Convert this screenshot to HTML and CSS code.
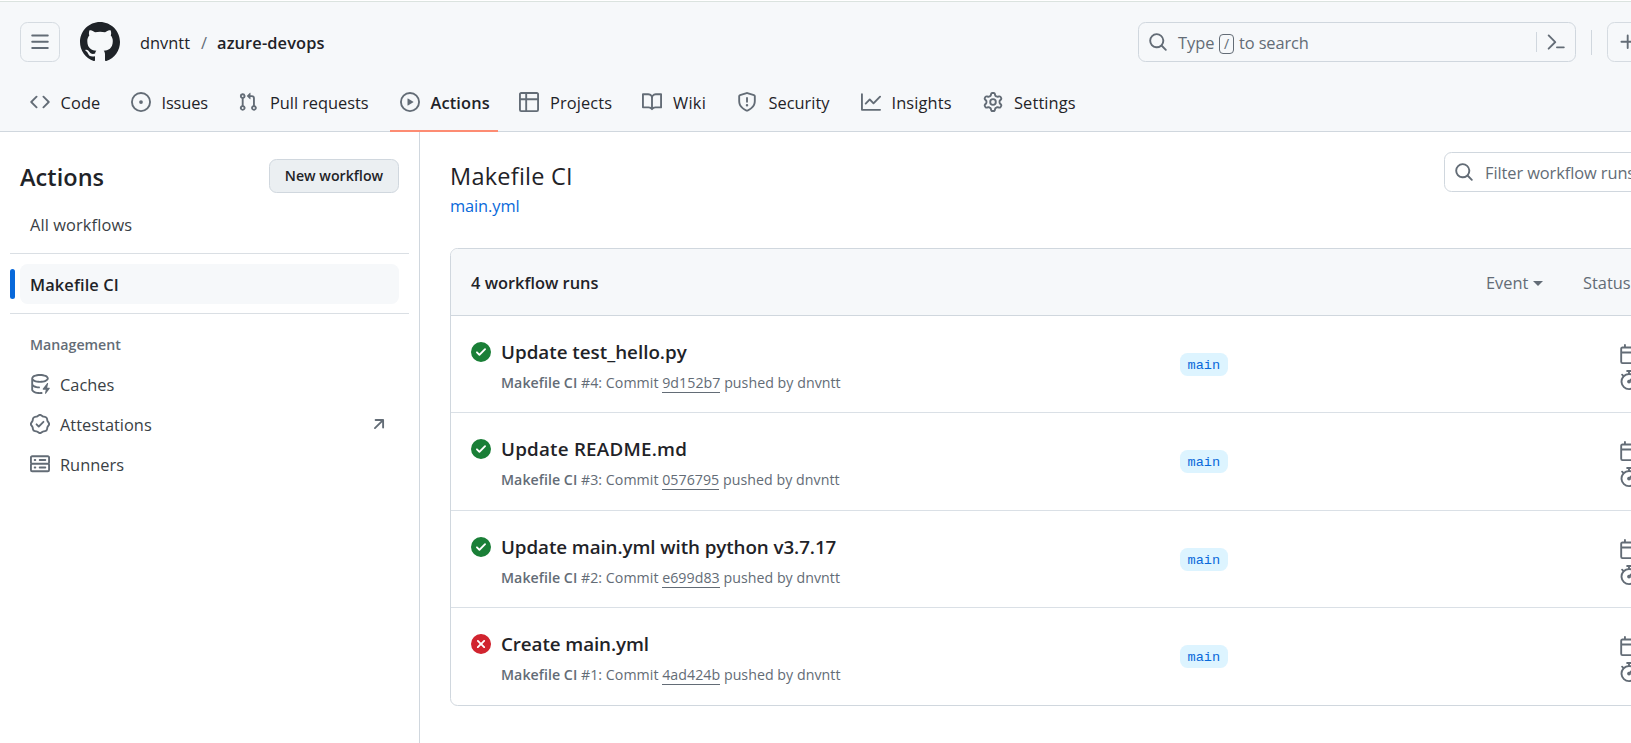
FILE: index.html
```html
<!DOCTYPE html>
<html lang="en">
<head>
<meta charset="utf-8">
<title>Workflow runs · dnvntt/azure-devops</title>
<link rel="stylesheet" href="styles.css">
</head>
<body>
<svg class="sprite" aria-hidden="true">
  <symbol id="bars" viewBox="0 0 16 16"><path d="M1 2.75A.75.75 0 0 1 1.75 2h12.5a.75.75 0 0 1 0 1.5H1.75A.75.75 0 0 1 1 2.75Zm0 5A.75.75 0 0 1 1.75 7h12.5a.75.75 0 0 1 0 1.5H1.75A.75.75 0 0 1 1 7.75ZM1.75 12h12.5a.75.75 0 0 1 0 1.5H1.75a.75.75 0 0 1 0-1.5Z"/></symbol>
  <symbol id="github" viewBox="0 0 16 16"><path d="M8 0c4.42 0 8 3.58 8 8a8.013 8.013 0 0 1-5.45 7.59c-.4.08-.55-.17-.55-.38 0-.27.01-1.13.01-2.2 0-.75-.25-1.23-.54-1.48 1.78-.2 3.65-.88 3.65-3.95 0-.88-.31-1.59-.82-2.15.08-.2.36-1.02-.08-2.12 0 0-.67-.22-2.2.82-.64-.18-1.32-.27-2-.27-.68 0-1.36.09-2 .27-1.53-1.03-2.2-.82-2.2-.82-.44 1.1-.16 1.92-.08 2.12-.51.56-.82 1.28-.82 2.15 0 3.06 1.86 3.75 3.64 3.95-.23.2-.44.55-.51 1.07-.46.21-1.61.55-2.33-.66-.15-.24-.6-.83-1.23-.82-.67.01-.27.38.01.53.34.19.73.9.82 1.13.16.45.68 1.31 2.69.94 0 .67.01 1.3.01 1.49 0 .21-.15.45-.55.38A7.995 7.995 0 0 1 0 8c0-4.42 3.58-8 8-8Z"/></symbol>
  <symbol id="code" viewBox="0 0 16 16"><path d="m11.28 3.22 4.25 4.25a.75.75 0 0 1 0 1.06l-4.25 4.25a.749.749 0 0 1-1.275-.326.749.749 0 0 1 .215-.734L13.94 8l-3.72-3.72a.749.749 0 0 1 .326-1.275.749.749 0 0 1 .734.215Zm-6.56 0a.751.751 0 0 1 1.042.018.751.751 0 0 1 .018 1.042L2.06 8l3.72 3.72a.749.749 0 0 1-.326 1.275.749.749 0 0 1-.734-.215L.47 8.53a.75.75 0 0 1 0-1.06Z"/></symbol>
  <symbol id="issue" viewBox="0 0 16 16"><path d="M8 9.5a1.5 1.5 0 1 0 0-3 1.5 1.5 0 0 0 0 3Z"/><path d="M8 0a8 8 0 1 1 0 16A8 8 0 0 1 8 0ZM1.5 8a6.5 6.5 0 1 0 13 0 6.5 6.5 0 0 0-13 0Z"/></symbol>
  <symbol id="pull" viewBox="0 0 16 16"><path d="M1.5 3.25a2.25 2.25 0 1 1 3 2.122v5.256a2.251 2.251 0 1 1-1.5 0V5.372A2.25 2.25 0 0 1 1.5 3.25Zm5.677-.177L9.573.677A.25.25 0 0 1 10 .854V2.5h1A2.5 2.5 0 0 1 13.5 5v5.628a2.251 2.251 0 1 1-1.5 0V5a1 1 0 0 0-1-1h-1v1.646a.25.25 0 0 1-.427.177L7.177 3.427a.25.25 0 0 1 0-.354ZM3.75 2.5a.75.75 0 1 0 0 1.5.75.75 0 0 0 0-1.5Zm0 9.5a.75.75 0 1 0 0 1.5.75.75 0 0 0 0-1.5Zm8.25.75a.75.75 0 1 0 1.5 0 .75.75 0 0 0-1.5 0Z"/></symbol>
  <symbol id="play" viewBox="0 0 16 16"><path d="M8 0a8 8 0 1 1 0 16A8 8 0 0 1 8 0ZM1.5 8a6.5 6.5 0 1 0 13 0 6.5 6.5 0 0 0-13 0Zm4.879-2.773 4.264 2.559a.25.25 0 0 1 0 .428l-4.264 2.559A.25.25 0 0 1 6 10.559V5.442a.25.25 0 0 1 .379-.215Z"/></symbol>
  <symbol id="table" viewBox="0 0 16 16"><path d="M0 1.75C0 .784.784 0 1.75 0h12.5C15.216 0 16 .784 16 1.75v12.5A1.75 1.75 0 0 1 14.25 16H1.75A1.75 1.75 0 0 1 0 14.25ZM6.5 6.5v8h7.75a.25.25 0 0 0 .25-.25V6.5Zm8-1.5V1.75a.25.25 0 0 0-.25-.25H6.5V5Zm-13 1.5v7.75c0 .138.112.25.25.25H5v-8ZM5 5V1.5H1.75a.25.25 0 0 0-.25.25V5Z"/></symbol>
  <symbol id="book" viewBox="0 0 16 16"><path d="M0 1.75A.75.75 0 0 1 .75 1h4.253c1.227 0 2.317.59 3 1.501A3.743 3.743 0 0 1 11.006 1h4.245a.75.75 0 0 1 .75.75v10.5a.75.75 0 0 1-.75.75h-4.507a2.25 2.25 0 0 0-1.591.659l-.622.621a.75.75 0 0 1-1.06 0l-.622-.621A2.25 2.25 0 0 0 5.258 13H.75a.75.75 0 0 1-.75-.75Zm7.251 10.324.004-5.073-.002-2.253A2.25 2.25 0 0 0 5.003 2.5H1.5v9h3.757a3.75 3.75 0 0 1 1.994.574ZM8.755 4.75l-.004 7.322a3.752 3.752 0 0 1 1.992-.572H14.5v-9h-3.495a2.25 2.25 0 0 0-2.25 2.25Z"/></symbol>
  <symbol id="shield" viewBox="0 0 16 16"><path d="M7.467.133a1.748 1.748 0 0 1 1.066 0l5.25 1.68A1.75 1.75 0 0 1 15 3.48V7c0 1.566-.32 3.182-1.303 4.682-.983 1.498-2.585 2.813-5.032 3.855a1.697 1.697 0 0 1-1.33 0c-2.447-1.042-4.049-2.357-5.032-3.855C1.32 10.182 1 8.566 1 7V3.48a1.75 1.75 0 0 1 1.217-1.667Zm.61 1.429a.25.25 0 0 0-.153 0l-5.25 1.68a.25.25 0 0 0-.174.238V7c0 1.358.275 2.666 1.057 3.86.784 1.194 2.121 2.34 4.366 3.297a.196.196 0 0 0 .154 0c2.245-.956 3.582-2.104 4.366-3.298C13.225 9.666 13.5 8.36 13.5 7V3.48a.251.251 0 0 0-.174-.237l-5.25-1.68ZM8.75 4.75v3a.75.75 0 0 1-1.5 0v-3a.75.75 0 0 1 1.5 0ZM9 10.5a1 1 0 1 1-2 0 1 1 0 0 1 2 0Z"/></symbol>
  <symbol id="graph" viewBox="0 0 16 16"><path d="M1.5 1.75V13.5h13.75a.75.75 0 0 1 0 1.5H.75a.75.75 0 0 1-.75-.75V1.75a.75.75 0 0 1 1.5 0Zm14.28 2.53-5.25 5.25a.75.75 0 0 1-1.06 0L7 7.06 4.28 9.78a.751.751 0 0 1-1.042-.018.751.751 0 0 1-.018-1.042l3.25-3.25a.75.75 0 0 1 1.06 0L10 7.94l4.72-4.72a.751.751 0 0 1 1.042.018.751.751 0 0 1 .018 1.042Z"/></symbol>
  <symbol id="gear" viewBox="0 0 16 16"><path d="M8 0a8.2 8.2 0 0 1 .701.031C9.444.095 9.99.645 10.16 1.29l.288 1.107c.018.066.079.158.212.224.231.114.454.243.668.386.123.082.233.09.299.071l1.103-.303c.644-.176 1.392.021 1.82.63.27.385.506.792.704 1.218.315.675.111 1.422-.364 1.891l-.814.806c-.049.048-.098.147-.088.294.016.257.016.515 0 .772-.01.147.038.246.088.294l.814.806c.475.469.679 1.216.364 1.891a7.977 7.977 0 0 1-.704 1.217c-.428.61-1.176.807-1.82.63l-1.102-.302c-.067-.019-.177-.011-.3.071a5.909 5.909 0 0 1-.668.386c-.133.066-.194.158-.211.224l-.29 1.106c-.168.646-.715 1.196-1.458 1.26a8.006 8.006 0 0 1-1.402 0c-.743-.064-1.289-.614-1.458-1.26l-.289-1.106c-.018-.066-.079-.158-.212-.224a5.738 5.738 0 0 1-.668-.386c-.123-.082-.233-.09-.299-.071l-1.103.303c-.644.176-1.392-.021-1.82-.63a8.12 8.12 0 0 1-.704-1.218c-.315-.675-.111-1.422.363-1.891l.815-.806c.05-.048.098-.147.088-.294a6.214 6.214 0 0 1 0-.772c.01-.147-.038-.246-.088-.294l-.815-.806C.635 6.045.431 5.298.746 4.623a7.92 7.92 0 0 1 .704-1.217c.428-.61 1.176-.807 1.82-.63l1.102.302c.067.019.177.011.3-.071.214-.143.437-.272.668-.386.133-.066.194-.158.211-.224l.29-1.106C6.009.645 6.556.095 7.299.03 7.53.01 7.764 0 8 0Zm-.571 1.525c-.036.003-.108.036-.137.146l-.289 1.105c-.147.561-.549.967-.998 1.189-.173.086-.34.183-.5.29-.417.278-.97.423-1.529.27l-1.103-.303c-.109-.03-.175.016-.195.045-.22.312-.412.644-.573.99-.014.031-.021.11.059.19l.815.806c.411.406.562.957.53 1.456a4.709 4.709 0 0 0 0 .582c.032.499-.119 1.05-.53 1.456l-.815.806c-.081.08-.073.159-.059.19.162.346.353.677.573.989.02.03.085.076.195.046l1.102-.303c.56-.153 1.113-.008 1.53.27.161.107.328.204.501.29.447.222.85.629.997 1.189l.289 1.105c.029.109.101.143.137.146a6.6 6.6 0 0 0 1.142 0c.036-.003.108-.036.137-.146l.289-1.105c.147-.561.549-.967.998-1.189.173-.086.34-.183.5-.29.417-.278.97-.423 1.529-.27l1.103.303c.109.029.175-.016.195-.045.22-.313.411-.644.573-.99.014-.031.021-.11-.059-.19l-.815-.806c-.411-.406-.562-.957-.53-1.456a4.709 4.709 0 0 0 0-.582c-.032-.499.119-1.05.53-1.456l.815-.806c.081-.08.073-.159.059-.19a6.464 6.464 0 0 0-.573-.989c-.02-.03-.085-.076-.195-.046l-1.102.303c-.56.153-1.113.008-1.53-.27a4.44 4.44 0 0 0-.501-.29c-.447-.222-.85-.629-.997-1.189l-.289-1.105c-.029-.11-.101-.143-.137-.146a6.6 6.6 0 0 0-1.142 0ZM11 8a3 3 0 1 1-6 0 3 3 0 0 1 6 0ZM9.5 8a1.5 1.5 0 1 0-3.001.001A1.5 1.5 0 0 0 9.5 8Z"/></symbol>
  <symbol id="search" viewBox="0 0 16 16"><path d="M10.68 11.74a6 6 0 0 1-7.922-8.982 6 6 0 0 1 8.982 7.922l3.04 3.04a.749.749 0 0 1-.326 1.275.749.749 0 0 1-.734-.215ZM11.5 7a4.499 4.499 0 1 0-8.997 0A4.499 4.499 0 0 0 11.5 7Z"/></symbol>
  <symbol id="prompt" viewBox="0 0 16 16"><path d="m6.354 8.04-4.773 4.773a.75.75 0 1 0 1.061 1.06L7.945 8.57a.75.75 0 0 0 0-1.06L2.642 2.206a.75.75 0 0 0-1.06 1.061L6.353 8.04ZM8.75 11.5a.75.75 0 0 0 0 1.5h5.5a.75.75 0 0 0 0-1.5h-5.5Z"/></symbol>
  <symbol id="plus" viewBox="0 0 16 16"><path d="M7.75 2a.75.75 0 0 1 .75.75V7h4.25a.75.75 0 0 1 0 1.5H8.5v4.25a.75.75 0 0 1-1.5 0V8.5H2.75a.75.75 0 0 1 0-1.5H7V2.75A.75.75 0 0 1 7.75 2Z"/></symbol>
  <symbol id="cache" viewBox="0 0 16 16"><path d="M2.5 5.724V8c0 .248.238.7 1.169 1.159.874.43 2.144.745 3.62.822a.75.75 0 1 1-.078 1.498c-1.622-.085-3.102-.432-4.204-.975a5.565 5.565 0 0 1-.507-.28V12.5c0 .133.058.318.282.551.227.237.591.483 1.101.707 1.015.447 2.47.742 4.117.742.406 0 .802-.018 1.183-.052a.751.751 0 1 1 .134 1.494C8.89 15.98 8.45 16 8 16c-1.805 0-3.475-.32-4.721-.869-.623-.274-1.173-.619-1.579-1.041-.408-.425-.7-.964-.7-1.59v-9c0-.626.292-1.165.7-1.591.406-.42.956-.766 1.579-1.04C4.525.32 6.195 0 8 0c1.806 0 3.476.32 4.721.869.623.274 1.173.619 1.579 1.041.408.425.7.964.7 1.59 0 .626-.292 1.165-.7 1.591-.406.42-.956.766-1.578 1.04C11.475 6.68 9.805 7 8 7c-1.805 0-3.475-.32-4.721-.869a6.15 6.15 0 0 1-.779-.407Zm0-2.224c0 .133.058.318.282.551.227.237.591.483 1.101.707C4.898 5.205 6.353 5.5 8 5.5c1.646 0 3.101-.295 4.118-.742.508-.224.873-.471 1.1-.708.224-.232.282-.417.282-.55 0-.133-.058-.318-.282-.551-.227-.237-.591-.483-1.101-.707C11.102 1.795 9.647 1.5 8 1.5c-1.646 0-3.101.295-4.118.742-.508.224-.873.471-1.1.708-.224.232-.282.417-.282.55Z"/><path d="M14.49 7.582a.375.375 0 0 0-.66-.313l-3.625 4.625a.375.375 0 0 0 .295.606h2.127l-.619 2.922a.375.375 0 0 0 .666.304l3.125-4.125A.375.375 0 0 0 15.5 11h-1.778l.769-3.418Z"/></symbol>
  <symbol id="verified" viewBox="0 0 16 16"><path d="m9.585.52.929.68c.153.112.331.186.518.215l1.138.175a2.678 2.678 0 0 1 2.24 2.24l.174 1.139c.029.187.103.365.215.518l.68.928a2.677 2.677 0 0 1 0 3.17l-.68.928a1.174 1.174 0 0 0-.215.518l-.175 1.138a2.678 2.678 0 0 1-2.241 2.241l-1.138.175a1.17 1.17 0 0 0-.518.215l-.928.68a2.677 2.677 0 0 1-3.17 0l-.928-.68a1.174 1.174 0 0 0-.518-.215L3.83 14.41a2.678 2.678 0 0 1-2.24-2.24l-.175-1.138a1.17 1.17 0 0 0-.215-.518l-.68-.928a2.677 2.677 0 0 1 0-3.17l.68-.928c.112-.153.186-.331.215-.518l.175-1.14a2.678 2.678 0 0 1 2.24-2.24l1.139-.175c.187-.029.365-.103.518-.215l.928-.68a2.677 2.677 0 0 1 3.17 0ZM7.303 1.728l-.927.68a2.67 2.67 0 0 1-1.18.489l-1.137.174a1.179 1.179 0 0 0-.987.987l-.174 1.136a2.677 2.677 0 0 1-.489 1.18l-.68.928a1.18 1.18 0 0 0 0 1.394l.68.927c.256.348.424.753.489 1.18l.174 1.137c.078.509.478.909.987.987l1.136.174a2.67 2.67 0 0 1 1.18.489l.928.68c.414.305.979.305 1.394 0l.927-.68a2.67 2.67 0 0 1 1.18-.489l1.137-.174a1.18 1.18 0 0 0 .987-.987l.174-1.136a2.67 2.67 0 0 1 .489-1.18l.68-.928a1.176 1.176 0 0 0 0-1.394l-.68-.927a2.686 2.686 0 0 1-.489-1.18l-.174-1.137a1.179 1.179 0 0 0-.987-.987l-1.136-.174a2.677 2.677 0 0 1-1.18-.489l-.928-.68a1.176 1.176 0 0 0-1.394 0ZM11.28 6.78l-3.75 3.75a.75.75 0 0 1-1.06 0L4.72 8.78a.751.751 0 0 1 .018-1.042.751.751 0 0 1 1.042-.018L7 8.94l3.22-3.22a.751.751 0 0 1 1.042.018.751.751 0 0 1 .018 1.042Z"/></symbol>
  <symbol id="server" viewBox="0 0 16 16"><path d="M1.75 1h12.5c.966 0 1.75.784 1.75 1.75v4c0 .372-.116.717-.314 1 .198.283.314.628.314 1v4a1.75 1.75 0 0 1-1.75 1.75H1.75A1.75 1.75 0 0 1 0 12.75v-4c0-.358.109-.707.314-1a1.739 1.739 0 0 1-.314-1v-4C0 1.784.784 1 1.75 1ZM1.5 2.75v4c0 .138.112.25.25.25h12.5a.25.25 0 0 0 .25-.25v-4a.25.25 0 0 0-.25-.25H1.75a.25.25 0 0 0-.25.25Zm.25 5.75a.25.25 0 0 0-.25.25v4c0 .138.112.25.25.25h12.5a.25.25 0 0 0 .25-.25v-4a.25.25 0 0 0-.25-.25ZM7 4.75A.75.75 0 0 1 7.75 4h4.5a.75.75 0 0 1 0 1.5h-4.5A.75.75 0 0 1 7 4.75ZM7.75 10h4.5a.75.75 0 0 1 0 1.5h-4.5a.75.75 0 0 1 0-1.5ZM3 4.75A.75.75 0 0 1 3.75 4h.5a.75.75 0 0 1 0 1.5h-.5A.75.75 0 0 1 3 4.75ZM3.75 10h.5a.75.75 0 0 1 0 1.5h-.5a.75.75 0 0 1 0-1.5Z"/></symbol>
  <symbol id="arrow" viewBox="0 0 16 16"><path d="M4.53 4.75A.75.75 0 0 1 5.28 4h6.01a.75.75 0 0 1 .75.75v6.01a.75.75 0 0 1-1.5 0v-4.2l-5.26 5.261a.749.749 0 0 1-1.275-.326.749.749 0 0 1 .215-.734L9.48 5.5h-4.2a.75.75 0 0 1-.75-.75Z"/></symbol>
  <symbol id="ok" viewBox="0 0 16 16"><path d="M8 16A8 8 0 1 1 8 0a8 8 0 0 1 0 16Zm3.78-9.72a.751.751 0 0 0-.018-1.042.751.751 0 0 0-1.042-.018L6.75 9.19 5.28 7.72a.751.751 0 0 0-1.042.018.751.751 0 0 0-.018 1.042l2 2a.75.75 0 0 0 1.06 0Z"/></symbol>
  <symbol id="fail" viewBox="0 0 16 16"><path d="M2.343 13.657A8 8 0 1 1 13.658 2.343 8 8 0 0 1 2.343 13.657ZM6.03 4.97a.751.751 0 0 0-1.042.018.751.751 0 0 0-.018 1.042L6.94 8 4.97 9.97a.749.749 0 0 0 .326 1.275.749.749 0 0 0 .734-.215L8 9.06l1.97 1.97a.749.749 0 0 0 1.275-.326.749.749 0 0 0-.215-.734L9.06 8l1.97-1.97a.749.749 0 0 0-.326-1.275.749.749 0 0 0-.734.215L8 6.94Z"/></symbol>
  <symbol id="calendar" viewBox="0 0 16 16"><path d="M4.75 0a.75.75 0 0 1 .75.75V2h5V.75a.75.75 0 0 1 1.5 0V2h1.25c.966 0 1.75.784 1.75 1.75v10.5A1.75 1.75 0 0 1 13.25 16H2.75A1.75 1.75 0 0 1 1 14.25V3.75C1 2.784 1.784 2 2.75 2H4V.75A.75.75 0 0 1 4.75 0ZM2.5 7.5v6.75c0 .138.112.25.25.25h10.5a.25.25 0 0 0 .25-.25V7.5Zm10.75-4H2.75a.25.25 0 0 0-.25.25V6h11V3.75a.25.25 0 0 0-.25-.25Z"/></symbol>
  <symbol id="timer" viewBox="0 0 16 16"><path d="M5.75.75A.75.75 0 0 1 6.5 0h3a.75.75 0 0 1 0 1.5h-.75v1l-.001.041a6.724 6.724 0 0 1 3.464 1.435l.007-.006.75-.75a.749.749 0 0 1 1.275.326.749.749 0 0 1-.215.734l-.75.75-.006.007a6.75 6.75 0 1 1-10.548 0L2.72 5.03l-.75-.75a.751.751 0 0 1 .018-1.042.751.751 0 0 1 1.042-.018l.75.75.007.006A6.72 6.72 0 0 1 7.25 2.541V1.5H6.5a.75.75 0 0 1-.75-.75ZM8 14.5a5.25 5.25 0 1 0-.001-10.501A5.25 5.25 0 0 0 8 14.5Zm.389-6.7 1.33-1.33a.75.75 0 1 1 1.061 1.06L9.45 8.861A1.503 1.503 0 0 1 8 10.75a1.499 1.499 0 1 1 .389-2.95Z"/></symbol>
</svg>

<header class="header">
  <div class="topbar">
    <button class="icon-button"><svg class="icon"><use href="#bars"/></svg></button>
    <svg class="logo"><use href="#github"/></svg>
    <div class="crumbs"><span class="owner">dnvntt</span><span class="slash">/</span><span class="repo">azure-devops</span></div>
    <div class="search">
      <svg class="icon"><use href="#search"/></svg>
      <span class="search-type">Type</span><kbd class="key">/</kbd><span class="search-rest">to search</span>
      <span class="search-rule"></span>
      <svg class="icon"><use href="#prompt"/></svg>
    </div>
    <span class="topbar-rule"></span>
    <button class="icon-button create"><svg class="icon"><use href="#plus"/></svg></button>
  </div>
  <nav class="tabs">
    <a class="tab tab-code"><svg class="icon"><use href="#code"/></svg><span>Code</span></a>
    <a class="tab tab-issues"><svg class="icon"><use href="#issue"/></svg><span>Issues</span></a>
    <a class="tab tab-pulls"><svg class="icon"><use href="#pull"/></svg><span>Pull requests</span></a>
    <a class="tab tab-actions tab-current"><svg class="icon"><use href="#play"/></svg><span>Actions</span></a>
    <a class="tab tab-projects"><svg class="icon"><use href="#table"/></svg><span>Projects</span></a>
    <a class="tab tab-wiki"><svg class="icon"><use href="#book"/></svg><span>Wiki</span></a>
    <a class="tab tab-security"><svg class="icon"><use href="#shield"/></svg><span>Security</span></a>
    <a class="tab tab-insights"><svg class="icon"><use href="#graph"/></svg><span>Insights</span></a>
    <a class="tab tab-settings"><svg class="icon"><use href="#gear"/></svg><span>Settings</span></a>
  </nav>
</header>

<div class="layout">
  <aside class="sidebar">
    <div class="sidebar-head"><h2 class="sidebar-title">Actions</h2><button class="new-workflow">New workflow</button></div>
    <a class="side-item side-all"><span>All workflows</span></a>
    <hr class="side-rule">
    <div class="side-selected"><span class="side-mark"></span><a class="side-item side-current"><span>Makefile CI</span></a></div>
    <hr class="side-rule">
    <h3 class="side-heading">Management</h3>
    <a class="side-item"><svg class="icon"><use href="#cache"/></svg><span>Caches</span></a>
    <a class="side-item"><svg class="icon"><use href="#verified"/></svg><span>Attestations</span><svg class="icon side-arrow"><use href="#arrow"/></svg></a>
    <a class="side-item"><svg class="icon"><use href="#server"/></svg><span>Runners</span></a>
  </aside>

  <main class="main">
    <div class="main-head">
      <div class="main-name">
        <h1 class="main-title">Makefile CI</h1>
        <a class="main-file">main.yml</a>
      </div>
      <div class="filter"><svg class="icon"><use href="#search"/></svg><span>Filter workflow runs</span></div>
    </div>
    <section class="runs">
      <div class="runs-head">
        <strong class="runs-count">4 workflow runs</strong>
        <span class="menu menu-event">Event<i class="caret"></i></span>
        <span class="menu">Status<i class="caret"></i></span>
      </div>
      <article class="run">
        <svg class="icon ok"><use href="#ok"/></svg>
        <div class="run-text"><h4 class="run-title">Update test_hello.py</h4><p class="run-info"><b>Makefile CI</b> #4: Commit <a class="sha">9d152b7</a> pushed by dnvntt</p></div>
        <div class="run-branch"><span class="branch">main</span></div>
        <div class="run-meta"><svg class="icon"><use href="#calendar"/></svg><svg class="icon"><use href="#timer"/></svg></div>
      </article>
      <article class="run">
        <svg class="icon ok"><use href="#ok"/></svg>
        <div class="run-text"><h4 class="run-title run-title-caps">Update README.md</h4><p class="run-info"><b>Makefile CI</b> #3: Commit <a class="sha">0576795</a> pushed by dnvntt</p></div>
        <div class="run-branch"><span class="branch">main</span></div>
        <div class="run-meta"><svg class="icon"><use href="#calendar"/></svg><svg class="icon"><use href="#timer"/></svg></div>
      </article>
      <article class="run">
        <svg class="icon ok"><use href="#ok"/></svg>
        <div class="run-text"><h4 class="run-title run-title-tight">Update main.yml with python v3.7.17</h4><p class="run-info"><b>Makefile CI</b> #2: Commit <a class="sha">e699d83</a> pushed by dnvntt</p></div>
        <div class="run-branch"><span class="branch">main</span></div>
        <div class="run-meta"><svg class="icon"><use href="#calendar"/></svg><svg class="icon"><use href="#timer"/></svg></div>
      </article>
      <article class="run">
        <svg class="icon fail"><use href="#fail"/></svg>
        <div class="run-text"><h4 class="run-title run-title-tight">Create main.yml</h4><p class="run-info"><b>Makefile CI</b> #1: Commit <a class="sha">4ad424b</a> pushed by dnvntt</p></div>
        <div class="run-branch"><span class="branch">main</span></div>
        <div class="run-meta"><svg class="icon"><use href="#calendar"/></svg><svg class="icon"><use href="#timer"/></svg></div>
      </article>
    </section>
  </main>
</div>
</body>
</html>
```

FILE: styles.css
```css
* { box-sizing: border-box; }
html, body { height: 100%; }
body {
  margin: 0;
  overflow: hidden;
  display: flex;
  flex-direction: column;
  background: #fff;
  color: #1f2328;
  font: 16.4px/26px "Open Sans", "Noto Sans", sans-serif;
  white-space: nowrap;
}
h1, h2, h3, h4, p { margin: 0; font-weight: 400; }
button { font: inherit; color: inherit; padding: 0; }
.sprite { display: none; }
.icon { width: 20px; height: 20px; flex: none; display: block; fill: #636c76; }

/* Header */
.header {
  flex: none;
  margin-top: 1px;
  height: 131px;
  background: #f6f8fa;
  border-top: 1px solid #dbe3df;
  border-bottom: 1px solid #d0d7de;
}
.topbar { display: flex; align-items: center; width: 1680px; padding: 20px 0 0 20px; }
.icon-button {
  display: flex;
  align-items: center;
  justify-content: center;
  flex: none;
  width: 40px;
  height: 40px;
  border: 1px solid #d5dbe1;
  border-radius: 7.5px;
  background: transparent;
}
.logo { width: 40px; height: 40px; margin-left: 20px; flex: none; fill: #1f2328; }
.crumbs { display: flex; width: 1018px; padding: 2px 0 0 20px; }
.owner { width: 61px; }
.slash { width: 16px; color: #636c76; }
.repo { font-weight: 600; letter-spacing: 0.12px; }
.search {
  display: flex;
  align-items: center;
  width: 438px;
  height: 40px;
  flex: none;
  padding: 0 9px;
  border: 1px solid #d0d7de;
  border-radius: 7.5px;
  color: #636c76;
}
.search-type { width: 41px; margin-left: 10px; padding-top: 2px; }
.key {
  width: 15px;
  height: 20px;
  margin-top: 3px;
  border: 1px solid #636c76;
  border-radius: 4px;
  font: 14px/18px "Open Sans", sans-serif;
  text-align: center;
}
.search-rest { margin-left: 5px; padding-top: 2px; letter-spacing: -0.1px; }
.search-rule { width: 1px; height: 20px; margin: 0 9px 0 auto; background: #d0d7de; }
.topbar-rule { width: 1px; height: 25px; margin: 0 15px; background: #d0d7de; flex: none; }
.create { width: 70px; justify-content: flex-start; padding-left: 10px; }

.tabs { display: flex; gap: 10px; height: 70px; padding: 10px 0 0 20px; }
.tab { display: flex; align-items: center; gap: 10.5px; height: 60px; padding: 0 0 0 10px; }
.tab span { padding-top: 2px; letter-spacing: 0.12px; }
.tab-code { width: 91px; }
.tab-issues { width: 97px; }
.tab-issues span { letter-spacing: -0.15px; }
.tab-pulls { width: 152px; gap: 12px; }
.tab-pulls span { letter-spacing: -0.05px; }
.tab-actions { width: 108px; margin-right: 1px; }
.tab-projects { width: 113px; gap: 11px; }
.tab-wiki { width: 85px; gap: 11px; }
.tab-wiki span { letter-spacing: 0.3px; }
.tab-security { width: 114px; gap: 11.5px; }
.tab-security span { letter-spacing: 0; }
.tab-insights { width: 112px; }
.tab-settings { gap: 11px; }
.tab-current { font-weight: 600; box-shadow: inset 0 -2px #fd8c73; }

/* Sidebar */
.layout { display: flex; flex: 1; min-height: 0; }
.sidebar { width: 420px; flex: none; padding: 27px 10px 0; border-right: 1px solid #d0d7de; }
.sidebar-head { display: flex; justify-content: space-between; padding: 0 10px; height: 45px; }
.sidebar-title { font-size: 23.5px; line-height: 36px; font-weight: 560; letter-spacing: 0.05px; }
.new-workflow {
  width: 130px;
  height: 34px;
  border: 1px solid #d0d7de;
  border-radius: 7.5px;
  background: #ebeff2;
  font-size: 14.2px;
  font-weight: 560;
  line-height: 20px;
}
.side-item { display: flex; align-items: center; gap: 10px; height: 40px; margin: 0 10px; padding: 0 10px; color: #3a3f45; }
.side-item span { padding-top: 2px; }
.side-all span { letter-spacing: 0.1px; }
.side-rule { height: 1px; margin: 9px 0 10px; border: 0; background: #dadfe4; }
.side-selected { display: flex; align-items: center; }
.side-mark { width: 5px; height: 30px; border-radius: 3px; background: #0969da; }
.side-current { width: 379px; margin: 0 0 0 5px; border-radius: 7.5px; background: #f6f8fa; font-weight: 560; color: #1f2328; }
.side-current span { letter-spacing: 0.12px; }
.side-heading { height: 40px; padding: 8px 20px 0; font-size: 14.2px; line-height: 25px; font-weight: 600; color: #636c76; }
.side-arrow { margin-left: auto; }

/* Main column */
.main { flex: none; width: 1400px; padding: 20px 30px 0; }
.main-head { display: flex; height: 96px; }
.main-name { width: 994px; }
.main-title { font-size: 23.5px; line-height: 32px; margin-top: 8px; letter-spacing: 0.25px; }
.main-file { display: block; color: #0969da; line-height: 28px; letter-spacing: -0.1px; }
.filter {
  display: flex;
  align-items: center;
  gap: 11px;
  width: 330px;
  height: 40px;
  padding-left: 9px;
  border: 1px solid #d0d7de;
  border-radius: 7.5px;
  color: #636c76;
}
.filter span { padding-top: 2px; letter-spacing: -0.08px; }
.runs { border: 1px solid #d0d7de; border-radius: 7.5px; overflow: hidden; }
.runs-head {
  display: flex;
  align-items: center;
  height: 67px;
  padding: 1px 0 0 20px;
  border-bottom: 1px solid #d0d7de;
  background: #f6f8fa;
}
.runs-count { width: 1015px; font-weight: 600; }
.menu { display: flex; align-items: center; gap: 5px; color: #636c76; }
.menu-event { width: 97px; }
.caret { border: 5px solid transparent; border-top-color: #636c76; border-bottom: 0; margin-top: 2px; }
.run { display: flex; height: 97.3px; padding: 0 20px; border-bottom: 1px solid #dae0e6; }
.run:last-child { height: 97px; border-bottom: 0; }
.run > .icon { margin-top: 26px; }
.run > .ok { fill: #1a7f37; }
.run > .fail { fill: #d1242f; }
.run-text { width: 689px; flex: none; padding: 20px 0 0 10px; }
.run-title { font-size: 18.8px; line-height: 32px; font-weight: 560; }
.run-title-caps { letter-spacing: 0.22px; }
.run-title-tight { letter-spacing: -0.08px; }
.run-info { font-size: 14.2px; line-height: 22px; margin-top: 4px; color: #636c76; letter-spacing: 0.04px; }
.run-info b { font-weight: 600; }
.sha { border-bottom: 1px solid #636c76; }
.run-branch { width: 439px; flex: none; padding-top: 37px; display: flex; align-items: flex-start; }
.branch {
  height: 23px;
  padding: 0 7.5px;
  border-radius: 7.5px;
  background: #ddf4ff;
  color: #0969da;
  font: 13.6px/25px "Liberation Mono", "DejaVu Sans Mono", monospace;
}
.run-meta { display: flex; flex-direction: column; gap: 6px; padding-top: 28px; }
```
